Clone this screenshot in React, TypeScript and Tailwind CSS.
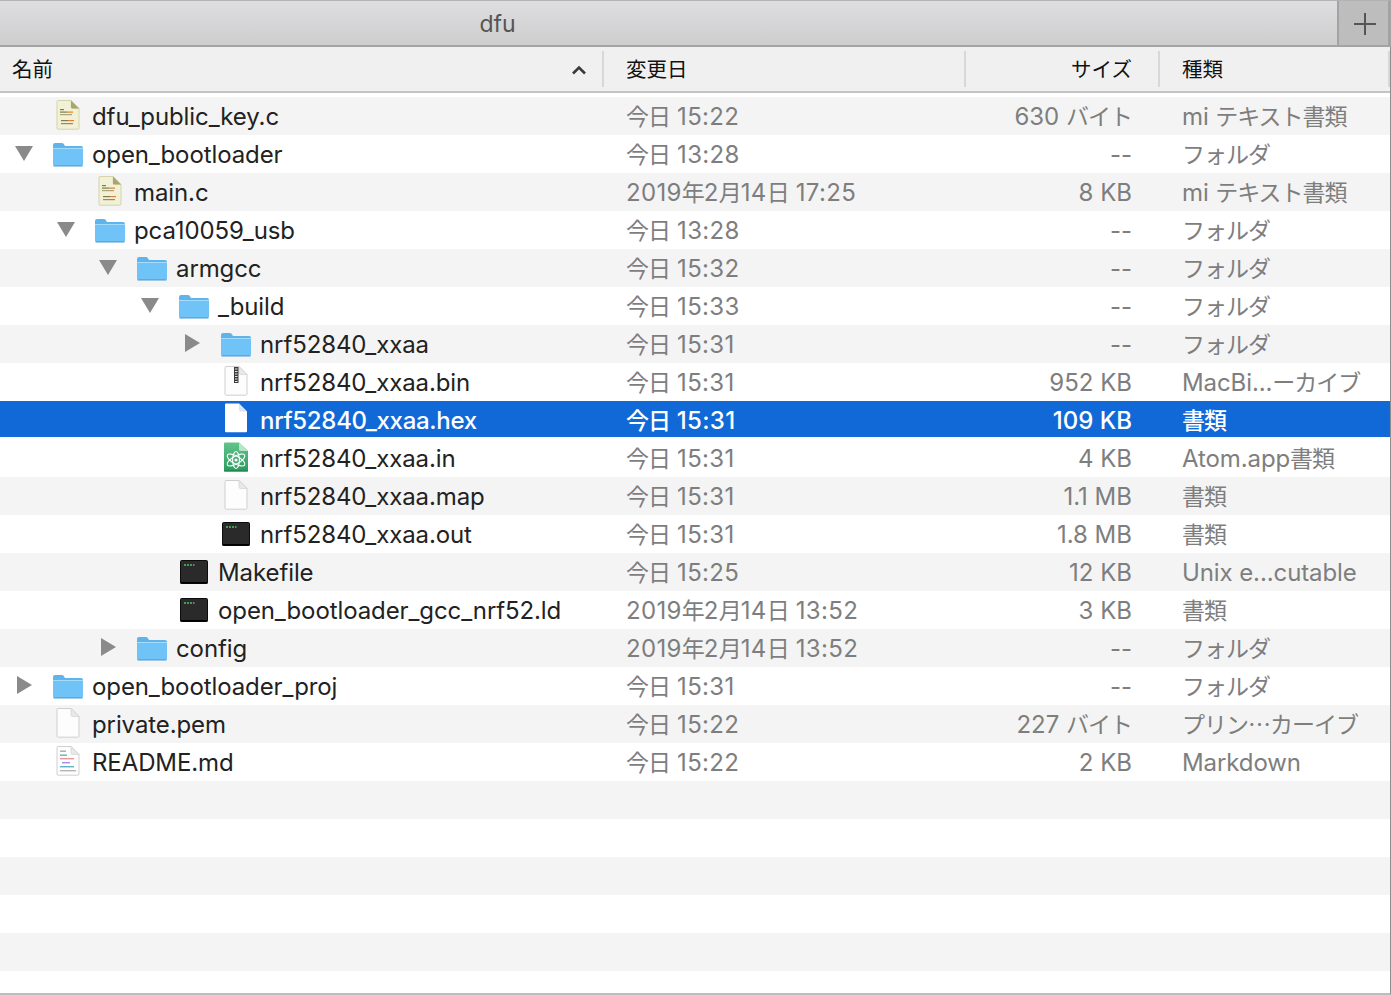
import React from "react";

type Icon = "c" | "folder" | "zip" | "blank" | "atom" | "term" | "md" | "blankSel";
type Row = { d: number; tri?: "down" | "right"; icon: Icon; name: string; date: string; size: string; kind: string; sel?: boolean };

const rows: Row[] = [
  { d: 0, icon: "c", name: "dfu_public_key.c", date: "今日 15:22", size: "630 バイト", kind: "mi テキスト書類" },
  { d: 0, tri: "down", icon: "folder", name: "open_bootloader", date: "今日 13:28", size: "--", kind: "フォルダ" },
  { d: 1, icon: "c", name: "main.c", date: "2019年2月14日 17:25", size: "8 KB", kind: "mi テキスト書類" },
  { d: 1, tri: "down", icon: "folder", name: "pca10059_usb", date: "今日 13:28", size: "--", kind: "フォルダ" },
  { d: 2, tri: "down", icon: "folder", name: "armgcc", date: "今日 15:32", size: "--", kind: "フォルダ" },
  { d: 3, tri: "down", icon: "folder", name: "_build", date: "今日 15:33", size: "--", kind: "フォルダ" },
  { d: 4, tri: "right", icon: "folder", name: "nrf52840_xxaa", date: "今日 15:31", size: "--", kind: "フォルダ" },
  { d: 4, icon: "zip", name: "nrf52840_xxaa.bin", date: "今日 15:31", size: "952 KB", kind: "MacBi...ーカイブ" },
  { d: 4, icon: "blankSel", name: "nrf52840_xxaa.hex", date: "今日 15:31", size: "109 KB", kind: "書類", sel: true },
  { d: 4, icon: "atom", name: "nrf52840_xxaa.in", date: "今日 15:31", size: "4 KB", kind: "Atom.app書類" },
  { d: 4, icon: "blank", name: "nrf52840_xxaa.map", date: "今日 15:31", size: "1.1 MB", kind: "書類" },
  { d: 4, icon: "term", name: "nrf52840_xxaa.out", date: "今日 15:31", size: "1.8 MB", kind: "書類" },
  { d: 3, icon: "term", name: "Makefile", date: "今日 15:25", size: "12 KB", kind: "Unix e...cutable" },
  { d: 3, icon: "term", name: "open_bootloader_gcc_nrf52.ld", date: "2019年2月14日 13:52", size: "3 KB", kind: "書類" },
  { d: 2, tri: "right", icon: "folder", name: "config", date: "2019年2月14日 13:52", size: "--", kind: "フォルダ" },
  { d: 0, tri: "right", icon: "folder", name: "open_bootloader_proj", date: "今日 15:31", size: "--", kind: "フォルダ" },
  { d: 0, icon: "blank", name: "private.pem", date: "今日 15:22", size: "227 バイト", kind: "プリン…カーイブ" },
  { d: 0, icon: "md", name: "README.md", date: "今日 15:22", size: "2 KB", kind: "Markdown" },
];

const indent = ["w-0", "w-[42px]", "w-[84px]", "w-[126px]", "w-[168px]"];

function Mixed({ text }: { text: string }) {
  const parts = text.split(/([\u3040-\u30ff\u4e00-\u9fff…]+)/);
  return (
    <>
      {parts.map((p, i) =>
        i % 2 === 1 ? (
          <span key={i} className="font-['Noto_Sans_CJK_JP','Inter',sans-serif] text-[23px] leading-[0] tracking-[-1px]">
            {p}
          </span>
        ) : (
          <span key={i}>{p}</span>
        ),
      )}
    </>
  );
}

function Doc({ fill = "#fdfdfd", stroke = "#cfcfcf", children }: { fill?: string; stroke?: string; children?: React.ReactNode }) {
  return (
    <svg width="24" height="30" viewBox="0 0 24 30" className="-mt-0.5">
      <path d="M1 1.5 a1 1 0 0 1 1-1 H15 L23 8.5 V28 a1.2 1.2 0 0 1-1.2 1.2 H2.2 A1.2 1.2 0 0 1 1 28 Z" fill={fill} stroke={stroke} />
      <path d="M15 .5 V7 a1.5 1.5 0 0 0 1.5 1.5 H23 Z" fill={stroke === "none" ? "#d7e3f6" : "#e9e9e9"} stroke={stroke === "none" ? "none" : stroke} strokeWidth=".6" />
      {children}
    </svg>
  );
}

function FileIcon({ icon }: { icon: Icon }) {
  if (icon === "folder")
    return (
      <svg width="32" height="26" viewBox="0 0 32 26">
        <path d="M1 4 a2 2 0 0 1 2-2 H10 a2 2 0 0 1 1.6.8 L13 5 H29 a2 2 0 0 1 2 2 V23 a2 2 0 0 1-2 2 H3 a2 2 0 0 1-2-2 Z" fill="#5fb4ec" />
        <rect x="1" y="7" width="30" height="17.5" rx="1.5" fill="#6fc3f6" />
        <rect x="1" y="7" width="30" height="1" fill="#a5dcfb" />
        <rect x="1.5" y="24.5" width="29" height="1" fill="#4b9cd6" />
      </svg>
    );
  if (icon === "term")
    return (
      <svg width="28" height="24" viewBox="0 0 28 24">
        <rect x=".5" y=".5" width="27" height="23" rx="1" fill="#2a2a2a" stroke="#0c0c0c" />
        <rect x=".5" y="22" width="27" height="1.5" fill="#000" />
        <path d="M4 5 H6 M7 5 H9 M10 5 H12 M13 5 H14.5" stroke="#4cc266" strokeWidth="1.6" />
      </svg>
    );
  if (icon === "blankSel") return <Doc fill="#ffffff" stroke="none" />;
  if (icon === "blank") return <Doc />;
  if (icon === "zip")
    return (
      <Doc>
        <rect x="10" y="1" width="4.5" height="16" fill="#3b3b3b" />
        <path d="M11 3 H13.5 M11 5.5 H13.5 M11 8 H13.5 M11 10.5 H13.5 M11 13 H13.5 M11 15.5 H13.5" stroke="#e8e8e8" strokeWidth="1" />
      </Doc>
    );
  if (icon === "atom")
    return (
      <svg width="24" height="30" viewBox="0 0 24 30" className="-mt-0.5">
        <defs>
          <linearGradient id="atomGreen" x1="0" y1="0" x2="0" y2="1">
            <stop offset="0" stopColor="#63c48c" />
            <stop offset="1" stopColor="#2a9a5e" />
          </linearGradient>
        </defs>
        <path d="M0 1.5 a1 1 0 0 1 1-1 H15 L24 9 V28 a1.5 1.5 0 0 1-1.5 1.5 H1.5 A1.5 1.5 0 0 1 0 28 Z" fill="url(#atomGreen)" />
        <path d="M15 .5 V7.5 a1.5 1.5 0 0 0 1.5 1.5 H24 Z" fill="#b5e6c6" />
        <rect x="0" y="28" width="24" height="1.5" fill="#1f8a4e" />
        <g fill="none" stroke="#fff" strokeWidth="1.1">
          <ellipse cx="12" cy="18" rx="10" ry="3.8" transform="rotate(30 12 18)" />
          <ellipse cx="12" cy="18" rx="10" ry="3.8" transform="rotate(-30 12 18)" />
          <ellipse cx="12" cy="18" rx="8.5" ry="3.4" transform="rotate(90 12 18)" />
        </g>
        <circle cx="12" cy="18" r="1.6" fill="#fff" />
      </svg>
    );
  if (icon === "md")
    return (
      <Doc>
        <rect x="4" y="4.5" width="6" height="1.4" fill="#a9a9a9" />
        <rect x="4" y="8.5" width="7" height="1.4" fill="#5eb4c0" />
        <rect x="4" y="12" width="14" height="1.4" fill="#e29a9a" />
        <rect x="6" y="16" width="8" height="1.4" fill="#a78be8" />
        <rect x="4" y="20" width="14" height="1.4" fill="#5eb4c0" />
        <rect x="4" y="24" width="16" height="1.4" fill="#b5b5b5" />
      </Doc>
    );
  return (
    <Doc fill="#f2f1d6" stroke="#d4d3ad">
      <path d="M15 .5 V7 a1.5 1.5 0 0 0 1.5 1.5 H23 Z" fill="#a8a668" />
      <rect x="4" y="9" width="4" height="1.2" fill="#7f7d4a" />
      <rect x="4" y="11.5" width="7" height="1.2" fill="#7f7d4a" />
      <rect x="11" y="11.5" width="6" height="1.2" fill="#e0813a" />
      <rect x="4" y="14" width="12" height="1.2" fill="#a8a678" />
      <rect x="5" y="20" width="7" height="1.2" fill="#7f7d4a" />
      <rect x="12" y="20" width="6" height="1.2" fill="#e0813a" />
      <rect x="5" y="23" width="12" height="1.2" fill="#8f8d5a" />
    </Doc>
  );
}

function Tri({ dir }: { dir?: "down" | "right" }) {
  if (dir === "down")
    return (
      <svg width="18" height="15" viewBox="0 0 18 15" className="ml-[15px] -mt-0.5">
        <path d="M0 0 H18 L9 15 Z" fill="#8a8a8a" />
      </svg>
    );
  if (dir === "right")
    return (
      <svg width="15" height="18" viewBox="0 0 15 18" className="ml-[17px] -mt-0.5">
        <path d="M0 0 L15 9 L0 18 Z" fill="#8a8a8a" />
      </svg>
    );
  return null;
}

function FileRow({ r, i }: { r: Row; i: number }) {
  const primary = r.sel ? "text-white font-medium tracking-[-0.3px]" : "text-[#222222]";
  const secondary = r.sel ? "text-white font-medium" : "text-[#7e7e7e]";
  const bg = r.sel ? "bg-[#1169d8]" : i % 2 === 0 ? "bg-[#f4f4f4]" : "bg-white";
  const pad = r.sel ? "pt-1" : "pt-0.5";
  return (
    <div className={`flex items-center ${r.sel ? "h-9 mb-0.5" : "h-[38px]"} ${bg}`}>
      <div className="flex w-[626px] shrink-0 items-center">
        <div className={`${indent[r.d]} shrink-0`} />
        <div className="flex w-[52px] shrink-0 items-center">
          <Tri dir={r.tri} />
        </div>
        <div className="flex w-8 shrink-0 items-center justify-center">
          <FileIcon icon={r.icon} />
        </div>
        <span className={`ml-2 whitespace-nowrap ${pad} ${primary}`}>{r.name}</span>
      </div>
      <div className={`w-[340px] shrink-0 whitespace-nowrap tracking-[0.33px] ${pad} ${secondary}`}>
        <Mixed text={r.date} />
      </div>
      <div className={`w-[166px] shrink-0 whitespace-nowrap text-right tracking-normal ${pad} ${secondary}`}>
        <Mixed text={r.size} />
      </div>
      <div className={`ml-[50px] whitespace-nowrap ${pad} ${secondary}`}>
        <Mixed text={r.kind} />
      </div>
    </div>
  );
}

export default function App() {
  return (
    <div className="flex h-[995px] w-[1391px] flex-col overflow-hidden bg-white font-['Inter','Noto_Sans_CJK_JP',sans-serif] text-[24px] leading-none tracking-[-0.1px]">
      <div className="flex h-[47px] shrink-0 border-b-2 border-r-[3px] border-t border-b-[#a3a3a3] border-r-[#a3a3a3] border-t-[#b2b2b2] bg-gradient-to-b from-[#dedddf] to-[#cfcecf]">
        <div className="w-[995px] self-center pt-0.5 text-center text-[23px] text-[#555555]">dfu</div>
        <div className="flex-1" />
        <div className="flex w-[51px] items-center justify-center border-l-2 border-[#a3a3a3] bg-[#bebdbe] pl-0.5 pt-0.5">
          <svg width="22" height="22" viewBox="0 0 22 22">
            <path d="M11 0 V22 M0 11 H22" stroke="#555555" strokeWidth="2" />
          </svg>
        </div>
      </div>
      <div className="flex min-h-0 flex-1 flex-col border-b-2 border-r border-b-[#bdbdbd] border-r-[#8e8e8e]">
        <div className="flex h-[46px] shrink-0 items-center border-b-2 border-[#c3c3c3] bg-[#f0f0f0] text-[20.5px] tracking-normal text-[#111111]">
          <div className="flex h-9 w-[604px] shrink-0 items-center justify-between border-r-2 border-[#d8d8d8] pl-3 pr-[15px] pt-0.5">
            <span>名前</span>
            <svg width="16" height="10" viewBox="0 0 16 10">
              <path d="M2 8.5 L8 2.5 L14 8.5" fill="none" stroke="#3a3a3a" strokeWidth="2.6" />
            </svg>
          </div>
          <div className="flex h-9 w-[362px] shrink-0 items-center border-r-2 border-[#d8d8d8] pl-[22px] pt-0.5">変更日</div>
          <div className="flex h-9 w-[194px] shrink-0 items-center justify-end border-r-2 border-[#d8d8d8] pr-[26px] pt-0.5">サイズ</div>
          <div className="flex h-9 flex-1 items-center border-r-2 border-[#d8d8d8] pl-[22px] pt-0.5">種類</div>
        </div>
        <div className="h-1 shrink-0" />
        {rows.map((r, i) => (
          <FileRow key={i} r={r} i={i} />
        ))}
        {[18, 19, 20, 21, 22].map((i) => (
          <div key={i} className={`h-[38px] shrink-0 ${i % 2 === 0 ? "bg-[#f4f4f4]" : "bg-white"}`} />
        ))}
      </div>
    </div>
  );
}
